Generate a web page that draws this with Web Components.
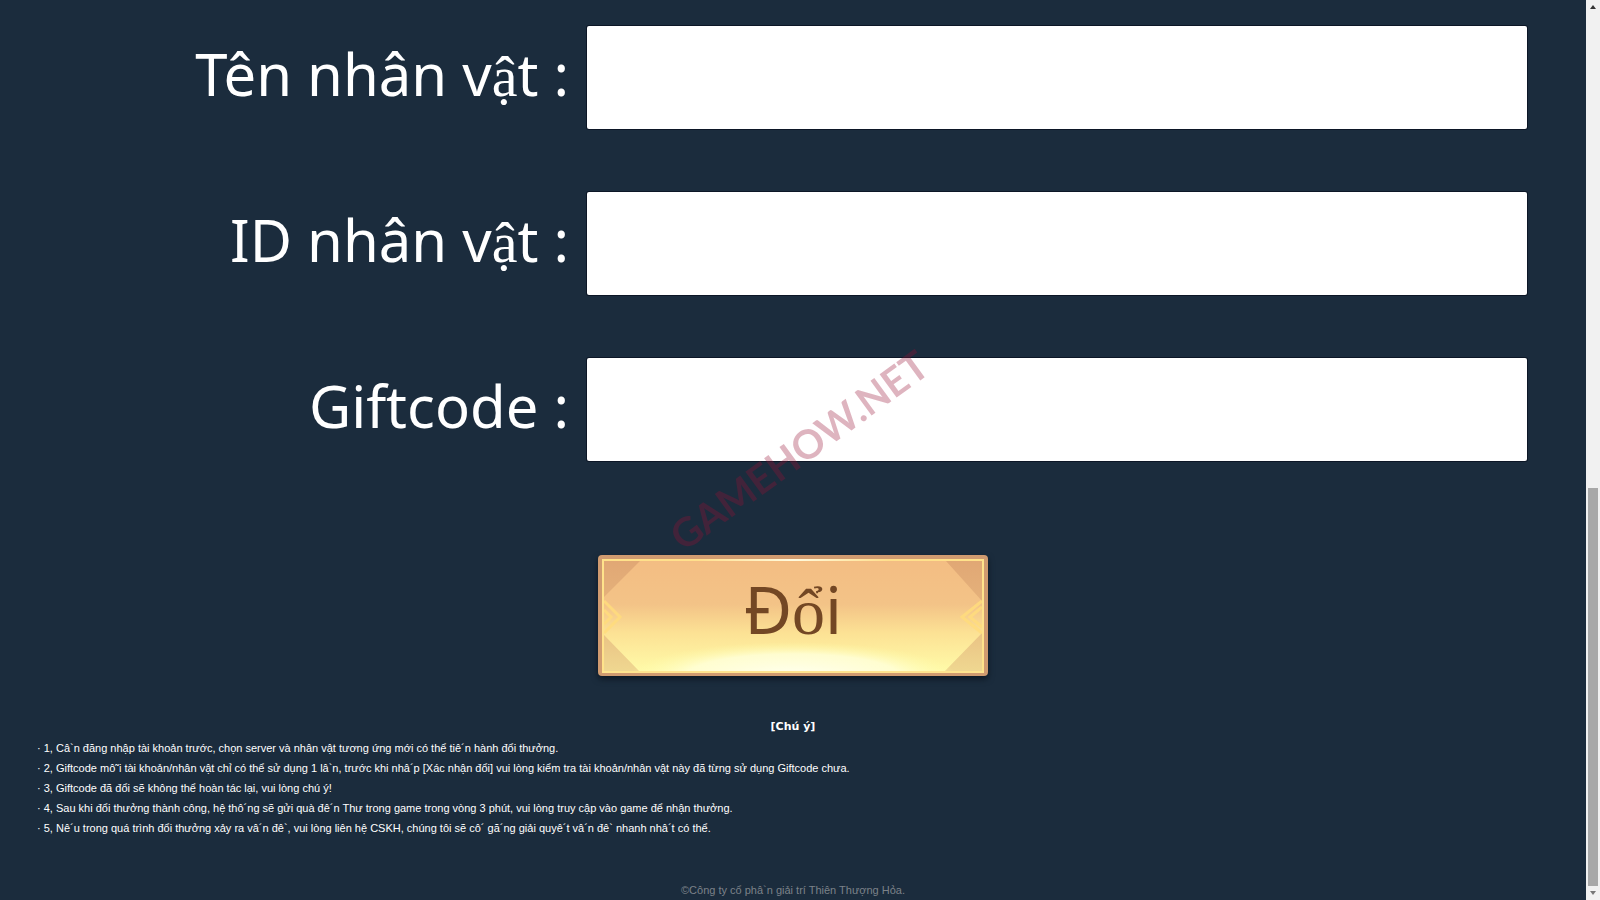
<!DOCTYPE html>
<html lang="vi">
<head>
<meta charset="utf-8">
<meta name="viewport" content="width=device-width, initial-scale=1">
<title>Giftcode</title>
<style>
  html, body {
    margin: 0;
    background: #1b2c3d;
  }

  body {
    --fallback: 'Liberation Serif', serif;
    --small: 'Liberation Sans', sans-serif;
    color: #fff;
    font-family: 'Noto Sans', sans-serif;
    font-size: 11px;
  }
</style>
</head>
<body>
<gift-page>
  <gift-field name="role" label="Tên nhân vật :"></gift-field>
  <gift-field name="role-id" label="ID nhân vật :"></gift-field>
  <gift-field name="code" label="Giftcode :"></gift-field>
  <gift-button slot="action" label="Đổi"></gift-button>
  <gift-notes slot="notes" heading="[Chú ý]">
    <li>· 1, Câ`n đăng nhập tài khoản trước, chọn server và nhân vật tương ứng mới có thể tiê´n hành đổi thưởng.</li>
    <li>· 2, Giftcode mô˜i tài khoản/nhân vật chỉ có thể sử dụng 1 lâ`n, trước khi nhâ´p [Xác nhận đổi] vui lòng kiểm tra tài khoản/nhân vật này đã từng sử dụng Giftcode chưa.</li>
    <li>· 3, Giftcode đã đổi sẽ không thể hoàn tác lại, vui lòng chú ý!</li>
    <li>· 4, Sau khi đổi thưởng thành công, hệ thô´ng sẽ gửi quà đê´n Thư trong game trong vòng 3 phút, vui lòng truy cập vào game để nhận thưởng.</li>
    <li>· 5, Nê´u trong quá trình đổi thưởng xảy ra vâ´n đê`, vui lòng liên hệ CSKH, chúng tôi sẽ cô´ gă´ng giải quyê´t vâ´n đê` nhanh nhâ´t có thể.</li>
  </gift-notes>
  <span slot="footer">©Công ty cổ phâ`n giải trí Thiên Thượng Hỏa.</span>
  <page-watermark slot="mark">GAMEHOW.NET</page-watermark>
</gift-page>

<script>
const mixFaces = (text) => text.replace(/[ậổ]/g, '<span class="alt">$&</span>');

class Base extends HTMLElement {
  constructor() {
    super();

    this.attachShadow({ mode: 'open' });
  }

  connectedCallback() {
    this.shadowRoot.innerHTML = this.render();
  }
}

class GiftPage extends Base {
  render() {
    return `
      <style>
        :host {
          display: grid;
          grid-template-columns: 1fr 14px;
          height: 100vh;
          overflow: hidden;
        }

        main {
          position: relative;
          display: flex;
          flex-direction: column;
        }

        form {
          display: flex;
          flex-direction: column;
          gap: 63px;
          padding-top: 26px;
        }

        .action {
          display: flex;
          justify-content: center;
          margin-top: 31px;
        }

        footer {
          margin-top: auto;
          line-height: 20px;
          text-align: center;
          color: #7b8289;
          font-family: var(--small);
        }
      </style>

      <main>
        <form>
          <slot></slot>
          <div class="action"><slot name="action"></slot></div>
        </form>
        <slot name="notes"></slot>
        <footer><slot name="footer"></slot></footer>
        <slot name="mark"></slot>
      </main>
      <page-scrollbar></page-scrollbar>
    `;
  }
}

class GiftField extends Base {
  render() {
    const name = this.getAttribute('name');

    return `
      <style>
        :host {
          display: grid;
          grid-template-columns: 587fr 940fr;
          padding-right: 59px;
        }

        label {
          padding-right: 18px;
          font-size: 58px;
          line-height: 96px;
          text-align: right;
          white-space: nowrap;
        }

        .alt {
          font-family: var(--fallback);
          line-height: 1;
        }

        input {
          box-sizing: border-box;
          width: 100%;
          height: 103px;
          padding: 0 20px;
          border: 0;
          border-radius: 2px;
          background: #fff;
          box-shadow: 0 0 0 1px #0c1626;
          font: inherit;
          font-size: 58px;
        }
      </style>

      <label for="${name}">${mixFaces(this.getAttribute('label'))}</label>
      <input id="${name}" name="${name}" type="text">
    `;
  }
}

class GiftButton extends Base {
  render() {
    return `
      <style>
        button {
          display: grid;
          width: 390px;
          height: 121px;
          padding: 0;
          border: 0;
          background: none;
          color: #734724;
          font: inherit;
          font-size: 66px;
          line-height: 106px;
          cursor: pointer;
        }

        svg, span.text {
          grid-area: 1 / 1;
        }

        svg {
          overflow: visible;
          filter: drop-shadow(0 3px 3px #0c1722);
        }

        span.text {
          z-index: 1;
        }

        .alt {
          font-family: var(--fallback);
          line-height: 1;
        }
      </style>

      <button type="button">
        <svg width="390" height="121" viewBox="0 0 390 121" aria-hidden="true">
          <defs>
            <linearGradient id="face" x2="0" y2="1">
              <stop offset="0" stop-color="#f3bd83"/>
              <stop offset=".4" stop-color="#f3c387"/>
              <stop offset=".65" stop-color="#fce194"/>
              <stop offset="1" stop-color="#fffba8"/>
            </linearGradient>
            <linearGradient id="corner" gradientUnits="userSpaceOnUse" x1="0" y1="0" x2="0" y2="121">
              <stop offset="0" stop-color="#e0a674"/>
              <stop offset=".4" stop-color="#e5b27b"/>
              <stop offset="1" stop-color="#f0da92"/>
            </linearGradient>
            <radialGradient id="glow">
              <stop offset="0" stop-color="#fffff0"/>
              <stop offset=".65" stop-color="#ffffd8" stop-opacity=".85"/>
              <stop offset="1" stop-color="#fffba8" stop-opacity="0"/>
            </radialGradient>
            <linearGradient id="shine">
              <stop offset="0" stop-color="#ffe28a"/>
              <stop offset=".25" stop-color="#ffdf8c"/>
              <stop offset=".5" stop-color="#fffbe0"/>
              <stop offset=".75" stop-color="#ffdf8c"/>
              <stop offset="1" stop-color="#ffe28a"/>
            </linearGradient>
            <clipPath id="inside"><rect x="6" y="6" width="378" height="111"/></clipPath>
          </defs>
          <rect width="390" height="121" rx="4" fill="#d09b70"/>
          <rect x="4" y="4" width="382" height="113" fill="url(#face)"/>
          <g clip-path="url(#inside)">
            <path d="M6 6H42L6 42zM348 6H384V46zM6 80V117H42zM384 78V117H346z" fill="url(#corner)"/>
            <ellipse cx="195" cy="121" rx="164" ry="34" fill="url(#glow)"/>
            <path d="M6 46L22 62L6 78M6 55L13 62L6 69M384 46L364 62L384 78M384 52L372 62L384 72" fill="none" stroke="#ffdc7d" stroke-width="3" stroke-opacity=".85"/>
          </g>
          <path d="M5 4V117M385 4V117" stroke="#ffe38b" stroke-width="2"/>
          <rect x="4" y="4" width="382" height="2" fill="url(#shine)"/>
          <rect x="4" y="116" width="382" height="2" fill="#ffe58f"/>
        </svg>
        <span class="text">${mixFaces(this.getAttribute('label'))}</span>
      </button>
    `;
  }
}

class GiftNotes extends Base {
  render() {
    return `
      <style>
        :host {
          display: block;
          margin-top: 41px;
          line-height: 20px;
          font-family: var(--small);
        }

        h2 {
          margin: 0 0 1px;
          font-family: 'DejaVu Sans', sans-serif;
          font-size: 11px;
          text-align: center;
        }

        ul {
          margin: 0;
          padding: 0 37px;
          list-style: none;
        }
      </style>

      <h2>${this.getAttribute('heading')}</h2>
      <ul><slot></slot></ul>
    `;
  }
}

class PageWatermark extends Base {
  render() {
    return `
      <style>
        :host {
          position: absolute;
          top: 450px;
          left: calc(50% + 6px);
          transform: translate(-50%, -50%) rotate(-36deg);
          color: #981034;
          opacity: .31;
          font-family: Lato, sans-serif;
          font-size: 40px;
          font-weight: 700;
          line-height: 1;
          pointer-events: none;
        }
      </style>

      <slot></slot>
    `;
  }
}

class PageScrollbar extends Base {
  render() {
    return `
      <style>
        :host {
          display: grid;
          grid-template-rows: 14px 474fr 398fr 14px;
          justify-items: center;
          align-items: center;
          background: #f1f1f1;
        }

        .thumb {
          grid-row: 3;
          align-self: stretch;
          width: 10px;
          background: #a8a8a8;
        }

        .down {
          grid-row: 4;
        }
      </style>

      <svg width="6" height="4" viewBox="0 0 6 4"><path d="M0 4L3 0L6 4z" fill="#333"/></svg>
      <div class="thumb"></div>
      <svg class="down" width="6" height="4" viewBox="0 0 6 4"><path d="M0 0L3 4L6 0z" fill="#777"/></svg>
    `;
  }
}

customElements.define('page-scrollbar', PageScrollbar);
customElements.define('page-watermark', PageWatermark);
customElements.define('gift-notes', GiftNotes);
customElements.define('gift-button', GiftButton);
customElements.define('gift-field', GiftField);
customElements.define('gift-page', GiftPage);
</script>
</body>
</html>
